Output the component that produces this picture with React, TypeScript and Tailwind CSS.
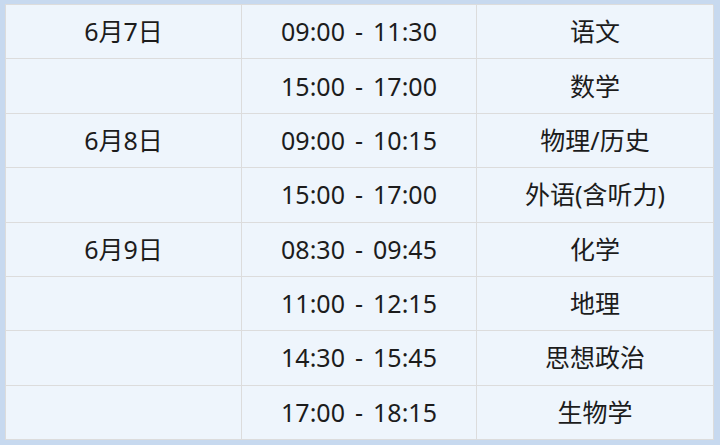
import React from "react";

const rows: [string, string, string, string][] = [
  ["6月7日", "09:00", "11:30", "语文"],
  ["", "15:00", "17:00", "数学"],
  ["6月8日", "09:00", "10:15", "物理/历史"],
  ["", "15:00", "17:00", "外语(含听力)"],
  ["6月9日", "08:30", "09:45", "化学"],
  ["", "11:00", "12:15", "地理"],
  ["", "14:30", "15:45", "思想政治"],
  ["", "17:00", "18:15", "生物学"],
];

export default function App() {
  return (
    <div
      className="w-[720px] h-[445px] bg-[#c7d9ef] pt-[4px] pl-[5px] overflow-hidden"
      style={{ fontFamily: '"Noto Sans", "Noto Sans CJK SC", sans-serif' }}
    >
      <div className="w-[708px] grid grid-cols-[236px_235px_237px] auto-rows-[54.375px] border-l border-t border-[#dcdcdc] bg-[#eef5fc] text-[25px] text-[#1c1c1c]">
        {rows.map((r, i) => (
          <React.Fragment key={i}>
            <div className="flex items-center justify-center border-r border-b border-[#dcdcdc] leading-none">
              {r[0]}
            </div>
            <div className="flex items-center justify-center border-r border-b border-[#dcdcdc] leading-none">
              <span>{r[1]}</span>
              <span className="mx-[10px]">-</span>
              <span>{r[2]}</span>
            </div>
            <div className="flex items-center justify-center border-r border-b border-[#dcdcdc] leading-none">
              {r[3]}
            </div>
          </React.Fragment>
        ))}
      </div>
    </div>
  );
}
